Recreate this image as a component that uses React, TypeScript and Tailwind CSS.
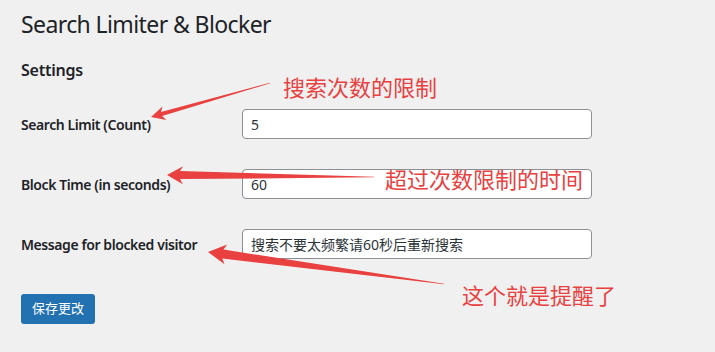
import React from "react";

type P = [number, number];

function arrowPoints(tip: P, tail: P, headLen: number, headHalf: number, shaftHalf: number, tailHalf: number): string {
  const dx = tail[0] - tip[0];
  const dy = tail[1] - tip[1];
  const len = Math.hypot(dx, dy);
  const ux = dx / len;
  const uy = dy / len;
  const px = -uy;
  const py = ux;
  const bx = tip[0] + ux * headLen;
  const by = tip[1] + uy * headLen;
  const bx2 = tip[0] + ux * (headLen - 3);
  const by2 = tip[1] + uy * (headLen - 3);
  const pts: P[] = [
    tip,
    [bx + px * headHalf, by + py * headHalf],
    [bx2 + px * shaftHalf, by2 + py * shaftHalf],
    [tail[0] + px * tailHalf, tail[1] + py * tailHalf],
    [tail[0] - px * tailHalf, tail[1] - py * tailHalf],
    [bx2 - px * shaftHalf, by2 - py * shaftHalf],
    [bx - px * headHalf, by - py * headHalf],
  ];
  return pts.map((p) => `${p[0].toFixed(1)},${p[1].toFixed(1)}`).join(" ");
}

const font = { fontFamily: '"Noto Sans", "Noto Sans CJK SC", sans-serif' };
const cjk = { fontFamily: '"Noto Sans CJK SC", sans-serif' };

function Row({ label, value }: { label: string; value: string }) {
  return (
    <div className="flex h-[60px] items-center">
      <div className="w-[221px] text-[14px] font-semibold tracking-[-0.42px] text-[#1d2327]">{label}</div>
      <div className="flex h-[30px] w-[350px] items-center rounded-[4px] border border-[#8c8f94] bg-white px-[8px] text-[14px] text-[#2c3338]">
        {value}
      </div>
    </div>
  );
}

export default function App() {
  const red = "#e8413f";
  return (
    <div className="relative h-[352px] w-[715px] overflow-hidden bg-[#f0f0f1] pl-[21px] pt-[9px]" style={font}>
      <h1 className="h-[30px] text-[23px] leading-[30px] font-normal tracking-[-0.6px] text-[#1d2327]">Search Limiter &amp; Blocker</h1>
      <h2 className="mt-[19px] h-[24px] text-[16px] leading-[24px] font-semibold tracking-[-0.25px] text-[#1d2327]">Settings</h2>
      <div className="mt-[12px] flex flex-col">
        <Row label="Search Limit (Count)" value="5" />
        <Row label="Block Time (in seconds)" value="60" />
        <Row label="Message for blocked visitor" value="搜索不要太频繁请60秒后重新搜索" />
      </div>
      <button className="mt-[20px] flex h-[30px] w-[74px] items-center justify-center rounded-[3px] bg-[#2271b1] text-[13px] text-white">
        保存更改
      </button>

      <svg className="pointer-events-none absolute left-0 top-0" width="715" height="352">
        <polygon fill={red} points={arrowPoints([151, 117], [270, 83], 14, 7, 2, 0.3)} />
        <polygon fill={red} points={arrowPoints([167, 175], [374, 177], 16, 9, 4, 0.3)} />
        <polygon fill={red} points={arrowPoints([208, 252], [444, 284], 18, 10, 4.5, 0.3)} />
      </svg>
      <div className="absolute left-[283px] top-[74px] text-[22px] leading-[24px] text-[#e8413f]" style={cjk}>搜索次数的限制</div>
      <div className="absolute left-[385px] top-[166px] text-[22px] leading-[24px] text-[#e8413f]" style={cjk}>超过次数限制的时间</div>
      <div className="absolute left-[462px] top-[282px] text-[22px] leading-[24px] text-[#e8413f]" style={cjk}>这个就是提醒了</div>
    </div>
  );
}
